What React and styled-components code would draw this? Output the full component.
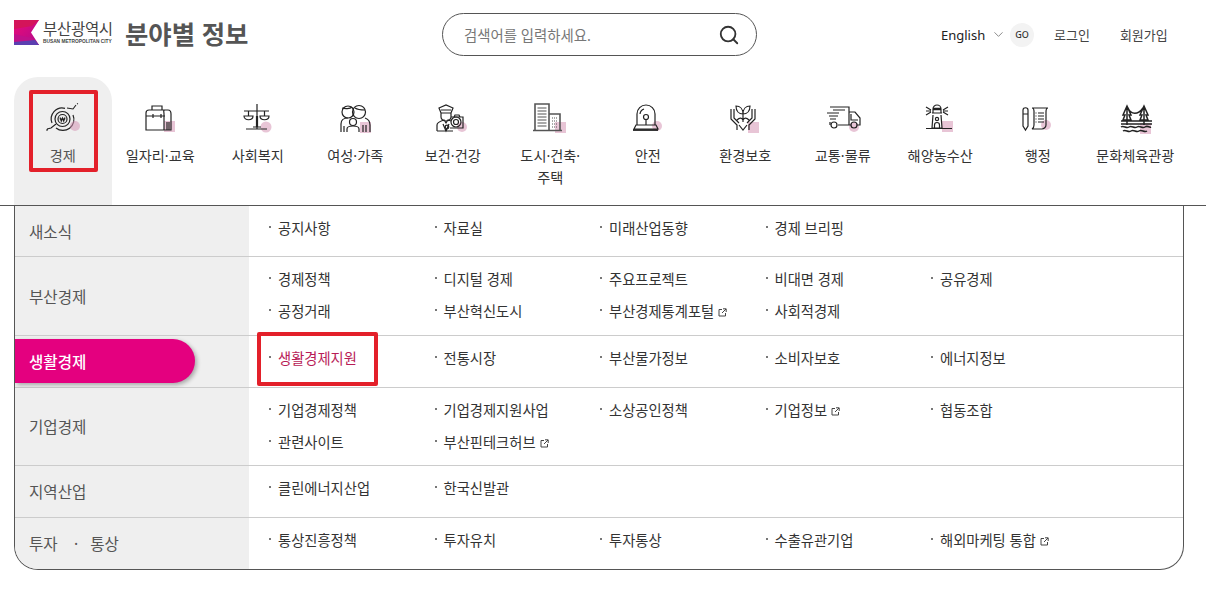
import React from 'react';
import styled, { createGlobalStyle } from 'styled-components';
import { Search as SearchIcon, ChevronDown } from 'lucide-react';

const Global = createGlobalStyle`
  html, body { margin: 0; padding: 0; background: #fff; }
  body {
    font-family: "Noto Sans", "Noto Sans CJK KR", sans-serif;
    color: #333;
  }
  ul { list-style: none; margin: 0; padding: 0; }
`;

const Page = styled.div`
  position: relative;
  width: 1206px;
  height: 592px;
  overflow: hidden;
`;

const Header = styled.header`
  display: grid;
  grid-template-columns: 428px 315px 1fr;
  align-items: center;
  height: 77px;
  padding: 0 0 8px 14px;
  box-sizing: border-box;
`;

const Brand = styled.div`
  display: flex;
  align-items: center;
  svg { margin-bottom: 5px; flex: none; }
`;

const LogoText = styled.div`
  display: flex;
  flex-direction: column;
  width: 70px;
  margin: 0 12px 5px 4px;
  color: #444;
`;

const LogoKo = styled.span`
  font-size: 15.5px;
  line-height: 19px;
  letter-spacing: -0.3px;
  white-space: nowrap;
`;

const LogoEn = styled.span`
  font-family: "Liberation Sans", sans-serif;
  font-size: 4.8px;
  line-height: 6px;
  font-weight: 700;
  white-space: nowrap;
`;

const BrandTitle = styled.h1`
  margin: 0 0 2px;
  font-size: 25.4px;
  line-height: 32px;
  font-weight: 700;
  color: #555;
  white-space: nowrap;
`;

const SearchBox = styled.div`
  display: flex;
  align-items: center;
  justify-content: space-between;
  height: 43px;
  padding: 0 16px 0 21px;
  box-sizing: border-box;
  border: 1px solid #555;
  border-radius: 22px;
  font-size: 14.4px;
  color: #777;
`;

const Util = styled.div`
  display: flex;
  align-items: center;
  padding-left: 184px;
  font-size: 13px;
`;

const Lang = styled.span`
  color: #222;
  width: 50px;
`;

const GoButton = styled.span`
  display: flex;
  align-items: center;
  justify-content: center;
  width: 24px;
  height: 24px;
  margin: 0 20px 0 4px;
  border-radius: 50%;
  background: #f3f3f3;
  color: #333;
  font-size: 9px;
  font-weight: 500;
`;

const UtilLink = styled.a`
  color: #444;
  margin-right: ${(p) => p.$gap || 0}px;
`;

const Tabs = styled.ul`
  display: grid;
  grid-template-columns: repeat(12, 97.5px);
  height: 128px;
  padding: 0 14px;
`;

const Tab = styled.li`
  display: flex;
  flex-direction: column;
  align-items: center;
  padding-top: 23px;
  box-sizing: border-box;
  border-radius: 24px 24px 0 0;
  background: ${(p) => (p.$active ? '#efefef' : 'transparent')};
  text-align: center;
`;

const TabIcon = styled.svg`
  display: block;
  width: 36px;
  height: 36px;
  overflow: visible;
  fill: none;
  stroke: #222;
  stroke-width: 1.2;
`;

const TabLabel = styled.span`
  margin-top: 9px;
  font-size: 14.2px;
  line-height: 22px;
  color: ${(p) => (p.$active ? '#555' : '#333')};
  width: 92px;
  white-space: pre-line;
`;

const Rule = styled.div`
  height: 1px;
  background: #555;
`;

const Panel = styled.div`
  width: 1170px;
  margin-left: 14px;
  box-sizing: border-box;
  border: 1px solid #555;
  border-top: 0;
  border-radius: 0 0 24px 24px;
  overflow: hidden;
`;

const Row = styled.section`
  display: grid;
  grid-template-columns: 234px 1fr;
  height: ${(p) => p.$h}px;
  box-sizing: border-box;
  border-top: ${(p) => (p.$first ? '0' : '1px solid #ccc')};
`;

const Side = styled.div`
  display: flex;
  align-items: center;
  background: #efefef;
  padding-left: 14px;
  font-size: 15.6px;
  color: #555;
  white-space: pre;
`;

const Pill = styled.div`
  display: flex;
  align-items: center;
  width: 180px;
  height: 44px;
  margin: -2px 0 0 -14px;
  padding: 1px 0 0 14px;
  box-sizing: border-box;
  border-radius: 0 22px 22px 0;
  background: #e4007f;
  box-shadow: 2px 2px 4px rgba(0, 0, 0, 0.3);
  color: #fff;
  font-weight: 500;
`;

const Links = styled.ul`
  display: grid;
  grid-template-columns: repeat(5, 165.5px);
  grid-auto-rows: 32px;
  padding: 7px 0 0 20px;
`;

const LinkItem = styled.li`
  display: flex;
  align-items: center;
  gap: 4px;
  font-size: 14.3px;
  line-height: 32px;
  color: ${(p) => (p.$on ? '#b81c57' : '#333')};
  white-space: nowrap;
  &::before {
    content: '';
    width: 2px;
    height: 2px;
    margin: -4px 3px 0 0;
    background: #777;
  }
`;

const RedBox = styled.div`
  position: absolute;
  left: ${(p) => p.$x}px;
  top: ${(p) => p.$y}px;
  width: ${(p) => p.$w}px;
  height: ${(p) => p.$h}px;
  box-sizing: border-box;
  border: 4px solid #e3202a;
  border-radius: 2px;
`;

const Ext = () => (
  <svg width="9" height="9" viewBox="0 0 9 9" fill="none" stroke="#444" strokeWidth="1">
    <path d="M4 1.5H1v6.5h6.5V5M5 .8h3.2V4M8 1 4 5" />
  </svg>
);

const Logo = () => (
  <svg width="25" height="25" viewBox="0 0 25 25">
    <defs>
      <linearGradient id="lg" x1="0" y1="0" x2="1" y2="1">
        <stop offset="0" stopColor="#ec0a78" />
        <stop offset="1" stopColor="#b00c8c" />
      </linearGradient>
    </defs>
    <path d="M0 0H25L17 12.5 25 25H0Z" fill="url(#lg)" />
    <path d="M0 0H25L18 6 0 9Z" fill="#d4145a" />
    <path d="M0 14 18 18 25 25H0Z" fill="#c0108a" />
    <path d="M0 22 21 20 25 25H0Z" fill="#5b3fb0" />
  </svg>
);

const pink = 'rgba(214, 150, 180, 0.55)';
const Dot = ({ x, y, r = 5 }) => <circle cx={x} cy={y} r={r} fill={pink} stroke="none" />;
const Sq = ({ x, y }) => <rect x={x} y={y} width="11" height="11" fill={pink} stroke="none" />;

const icons = [
  <>
    <circle cx="17.5" cy="19" r="7.5" />
    <circle cx="17.5" cy="19" r="4.5" />
    <path d="M7 23a11 11 0 0 1 13-14.7M28 15a11 11 0 0 1-17 13M15 17.5l1.3 3.5 1.2-3 1.2 3 1.3-3.5M14.8 19h5.4" />
    <path d="M2 29l4-1 5-4M22 8l6 1 3-4M32 4l1-.5M1 30h2" strokeWidth="1.1" />
    <Dot x={30} y={26} />
  </>,
  <>
    <Sq x={22} y={21} />
    <path d="M4 30V13c0-2 1-3 3-3h19c2 0 3 2 3 4v16zM4 16h19M23 10c-2 0-1 2-1 4v16M10 10V6h10v4M11 14v4M19 14v4M25 22v8M27 22v8" />
  </>,
  <>
    <Dot x={26} y={27} r={5.5} />
    <path d="M17 4v25M4 11h25M6 29h21M13 27h8M4 16h9c0 5-9 5-9 0zM20 16h9c0 5-9 5-9 0zM8.5 11v5M24.5 11v5" />
    <path d="M17 16v11" strokeWidth="2.2" />
  </>,
  <>
    <Sq x={23} y={22} />
    <circle cx="11" cy="12" r="6" />
    <circle cx="22" cy="12" r="6.5" />
    <circle cx="16" cy="22" r="3.5" />
    <path d="M5 8c3 1 8 1 10-1M18 8c3 2 6 2 10 2M4 32V24c0-4 3-6 7-6M28 18c3 1 5 3 5 7v7M10 32v-3c0-2 3-3 6-3s6 1 6 3v3M7 26v6M26 25v7M29 25v7" />
  </>,
  <>
    <Dot x={27} y={27} />
    <path d="M4 8l7-3 7 3-2 5H6zM6 10h10M6 13v4c0 2 2 4 5 4s5-2 5-4v-4M2 31v-6c0-3 4-4 7-5l2 3 2-3 3 1M2 31h16M8 24l3 7 3-7M16 17h12v11H15M19 17l1-2h4l1 2" />
    <circle cx="21" cy="22" r="5" />
    <circle cx="21" cy="22" r="2.5" />
    <circle cx="12" cy="27" r="1.8" />
  </>,
  <>
    <Sq x={23} y={22} />
    <g stroke="#555">
      <path d="M3 30V4h14v26M17 14h11v16M1 30.5h29" strokeWidth="1.6" />
      <path d="M5.5 8h9M5.5 11h9M5.5 14h9M5.5 17h9M5.5 20h9M5.5 23h9M5.5 26h9" />
      <path d="M20 18h5M20 21h5M20 24h5M20 27h5" strokeDasharray="1 1" />
    </g>
  </>,
  <>
    <Dot x={27} y={26} />
    <path d="M7 25V14a9 9 0 0 1 18 0v11M16 20v5M10 14a6 6 0 0 1 4-5" />
    <circle cx="16" cy="17" r="2.5" />
    <path d="M6 25h20l2 4H4z" />
    <path d="M3 30h25" strokeWidth="1.8" />
  </>,
  <>
    <Sq x={21} y={22} />
    <path d="M16 14c-4 0-7-3-7-8 4 0 7 3 7 8zM16 14c4 0 7-3 7-8-4 0-7 3-7 8zM16 14v8M4 9v10l6 6v5M28 9v10l-6 6v5M7 9v9l5 5M25 9v9l-5 5M10 20c3-3 5-2 6 0 1-2 3-3 6 0M12 25l4 5 4-5" />
  </>,
  <>
    <Dot x={29} y={27} />
    <path d="M5 7h19v18H13M8 10h12M2 13h12M4 16h9M5 19h6M5 22v3M24 12h6l5 6v7h-3M26 14v6h7M24 25h2" />
    <circle cx="9" cy="25" r="3" />
    <circle cx="29" cy="25" r="3" />
  </>,
  <>
    <Sq x={20} y={21} />
    <path d="M11 9a4 4 0 0 1 8 0v4h-8zM10 13h10M11 15l-1 13h10l-1-13M4 28.5h26M12.5 28v-3a2.5 2.5 0 0 1 5 0v3M4 7l5 3M4 11h5M4 15l5-3M26 7l-5 3M26 11h-5M26 15l-5-3" />
    <path d="M11 9h8" strokeWidth="2.5" />
    <circle cx="15" cy="19" r="1.6" />
  </>,
  <>
    <Dot x={26} y={25} />
    <path d="M3 10c0-3 5-3 5 0v16l-2.5 4L3 26zM3 14h5M12 8h16c-2 0-2 2-2 4v13c0 2-2 4-4 4H12c2-1 2-2 2-4V11c0-2-1-3-2-3zM15.5 13h1M18 13h6M15.5 16h1M18 16h6M15.5 19h1M18 19h6M15.5 22h1M18 22h6" />
  </>,
  <>
    <Sq x={23} y={23} />
    <g strokeWidth="1.5">
      <path d="M10 6l-4 9h2l-2 5h8l-2-5h2zM27 6l-4 9h2l-2 5h8l-2-5h2zM10 6v19M27 6v19M11 8c3 7 10 7 15 0M4 21h31M4 24h31" />
      <path d="M4 27c3-2 5 2 8 0s5 2 8 0 5 2 8 0 4 1 6 0M6 31c3-2 5 2 8 0s5 2 8 0 5 2 8 0" />
    </g>
  </>,
];

const tabs = ['경제', '일자리·교육', '사회복지', '여성·가족', '보건·건강', '도시·건축·\n주택', '안전', '환경보호', '교통·물류', '해양농수산', '행정', '문화체육관광'];

const rows = [
  { name: '새소식', h: 50, first: true, items: ['공지사항', '자료실', '미래산업동향', '경제 브리핑'] },
  { name: '부산경제', h: 79, items: ['경제정책', '디지털 경제', '주요프로젝트', '비대면 경제', '공유경제', '공정거래', '부산혁신도시', '부산경제통계포털*', '사회적경제'] },
  { name: '생활경제', h: 52, active: true, items: ['생활경제지원', '전통시장', '부산물가정보', '소비자보호', '에너지정보'] },
  { name: '기업경제', h: 78, items: ['기업경제정책', '기업경제지원사업', '소상공인정책', '기업정보*', '협동조합', '관련사이트', '부산핀테크허브*'] },
  { name: '지역산업', h: 52, items: ['클린에너지산업', '한국신발관'] },
  { name: '투자    ·   통상', h: 52, items: ['통상진흥정책', '투자유치', '투자통상', '수출유관기업', '해외마케팅 통합*'] },
];

const App = () => (
  <Page>
    <Global />
    <Header>
      <Brand>
        <Logo />
        <LogoText>
          <LogoKo>부산광역시</LogoKo>
          <LogoEn>BUSAN METROPOLITAN CITY</LogoEn>
        </LogoText>
        <BrandTitle>분야별 정보</BrandTitle>
      </Brand>
      <SearchBox>
        검색어를 입력하세요.
        <SearchIcon size={22} color="#333" strokeWidth={2} />
      </SearchBox>
      <Util>
        <Lang>English</Lang>
        <ChevronDown size={15} color="#666" strokeWidth={1.2} />
        <GoButton>GO</GoButton>
        <UtilLink $gap={30}>로그인</UtilLink>
        <UtilLink>회원가입</UtilLink>
      </Util>
    </Header>
    <Tabs>
      {tabs.map((t, i) => (
        <Tab key={t} $active={i === 0}>
          <TabIcon viewBox="0 0 36 36">{icons[i]}</TabIcon>
          <TabLabel $active={i === 0}>{t}</TabLabel>
        </Tab>
      ))}
    </Tabs>
    <Rule />
    <Panel>
      {rows.map((r) => (
        <Row key={r.name} $h={r.h} $first={r.first}>
          <Side>{r.active ? <Pill>{r.name}</Pill> : r.name}</Side>
          <Links>
            {r.items.map((it) => (
              <LinkItem key={it} $on={it === '생활경제지원'}>
                {it.replace('*', '')}
                {it.endsWith('*') && <Ext />}
              </LinkItem>
            ))}
          </Links>
        </Row>
      ))}
    </Panel>
    <RedBox $x={29} $y={90} $w={69} $h={82} />
    <RedBox $x={257} $y={332} $w={121} $h={54} />
  </Page>
);

export default App;
